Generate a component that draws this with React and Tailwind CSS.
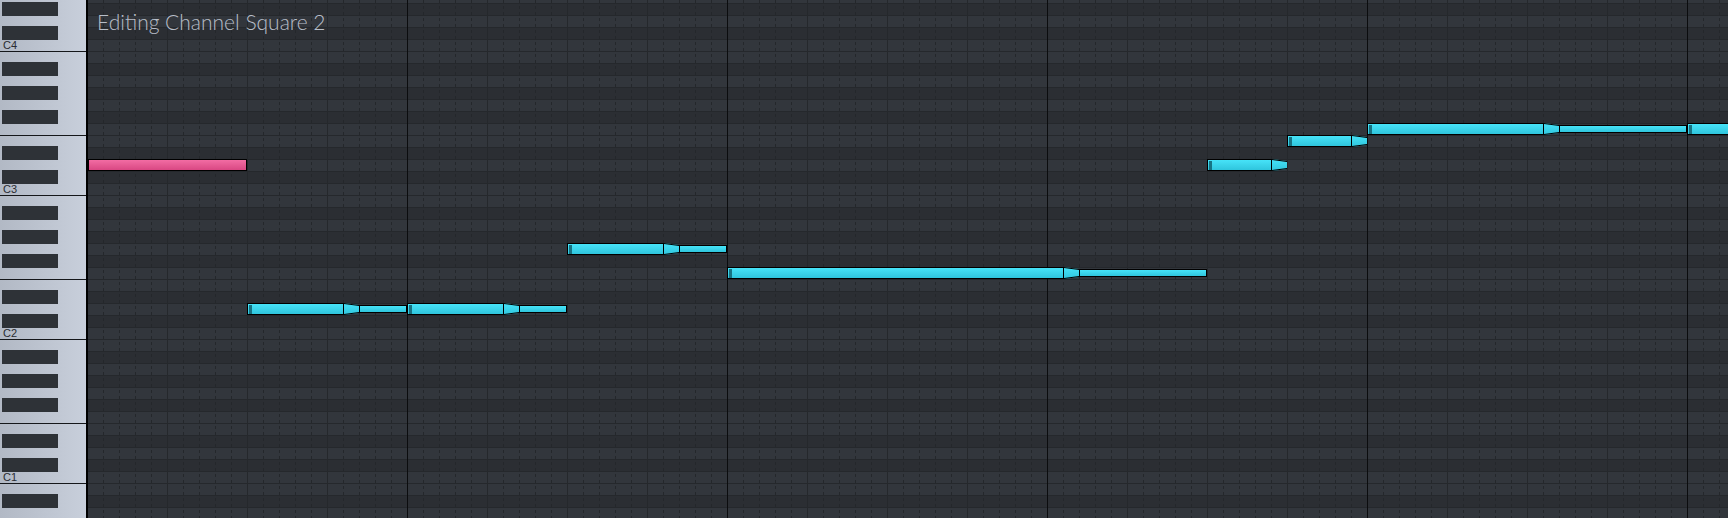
import React from "react";

const BLACK = new Set([1, 3, 6, 8, 10]);
const TOP_NOTE = 52; // E4
const BOTTOM_NOTE = 9; // A0
const GRID_X0 = 88;
const GRID_W = 1728 - GRID_X0;
const rowTop = (n) => -9 + (TOP_NOTE - n) * 12;

const ROWS = [];
for (let n = TOP_NOTE; n >= BOTTOM_NOTE; n--) ROWS.push(n);

const NOTES = [
  { s: 88, n: 38, e: 247, pink: true },
  { s: 247, n: 26, r: 343, e: 407 },
  { s: 407, n: 26, r: 503, e: 567 },
  { s: 567, n: 31, r: 663, e: 727 },
  { s: 727, n: 29, r: 1063, e: 1207 },
  { s: 1207, n: 38, r: 1271, e: 1287 },
  { s: 1287, n: 40, r: 1351, e: 1367 },
  { s: 1367, n: 41, r: 1543, e: 1687 },
  { s: 1687, n: 41, e: 1760 },
];

function KeyRow({ n }) {
  const s = n % 12;
  const isBlack = BLACK.has(s);
  const lineTop = s === 11 || s === 4;
  return (
    <div
      className={`h-[12px] shrink-0 flex items-end ${
        lineTop ? "border-t border-[#15171a]" : ""
      }`}
    >
      {isBlack ? (
        <div className="self-start ml-[2px] -mt-[1px] w-[56px] h-[14px] bg-[#2e3237]" />
      ) : null}
      {s === 0 ? (
        <span className="pl-[3px] text-[11px] leading-[11px] text-[#2a2d33] font-['Liberation_Sans',sans-serif]">
          C{Math.floor(n / 12)}
        </span>
      ) : null}
    </div>
  );
}

function GridRow({ n }) {
  const isBlack = BLACK.has(n % 12);
  return (
    <div
      className={`h-[12px] shrink-0 border-t border-[#25282c] ${
        isBlack ? "bg-[#2b2e33]" : "bg-[#32363c]"
      }`}
    />
  );
}

function GridLines() {
  const lines = [];
  for (let k = 1; 16 * k - 1 < GRID_W; k++) {
    const x = 16 * k - 1 + 0.5;
    if (k % 20 === 0)
      lines.push(<line key={k} x1={x} x2={x} y1={0} y2={518} stroke="#0b0c0e" />);
    else if (k % 5 === 0)
      lines.push(<line key={k} x1={x} x2={x} y1={0} y2={518} stroke="#25282c" />);
    else
      lines.push(
        <line key={k} x1={x} x2={x} y1={0} y2={518} stroke="#24272b" strokeDasharray="3 3" />
      );
  }
  return (
    <svg
      className="absolute left-0 top-0 pointer-events-none"
      width={GRID_W}
      height={518}
    >
      {lines}
    </svg>
  );
}

function Arrow() {
  return (
    <svg width="15" height="12" className="block shrink-0">
      <defs>
        <linearGradient id="cyArrow" x1="0" y1="0" x2="0" y2="1">
          <stop offset="0" stopColor="#46e3f8" />
          <stop offset="1" stopColor="#2fc5dd" />
        </linearGradient>
      </defs>
      <polygon points="0,0 15,2 15,10 0,12" fill="url(#cyArrow)" />
      <line x1="0" y1="0.5" x2="15" y2="2.5" stroke="#000" />
      <line x1="0" y1="11.5" x2="15" y2="9.5" stroke="#000" />
    </svg>
  );
}

function Note({ s, n, r, e, pink }) {
  const left = s - GRID_X0;
  const top = rowTop(n);
  const thickW = r != null ? r + 1 - s : e - s;
  const tailW = r != null ? e - (r + 16) : 0;
  return (
    <div className="absolute flex items-center h-[12px]" style={{ left, top }}>
      <div
        className={`h-[12px] shrink-0 border border-black ${
          pink
            ? "bg-linear-to-b from-[#f26ca3] to-[#d94783]"
            : "bg-linear-to-b from-[#46e3f8] to-[#2fc5dd]"
        }`}
        style={{ width: thickW }}
      >
        {!pink ? <div className="ml-[1px] mt-[1px] w-[3px] h-[9px] bg-[#177383]" /> : null}
      </div>
      {r != null ? <Arrow /> : null}
      {tailW > 0 ? (
        <div
          className="h-[8px] shrink-0 border border-black bg-linear-to-b from-[#46e3f8] to-[#2fc5dd]"
          style={{ width: tailW }}
        />
      ) : null}
    </div>
  );
}

export default function App() {
  return (
    <div className="w-[1728px] h-[518px] flex overflow-hidden bg-[#2f3338]">
      <div className="w-[86px] h-full shrink-0 overflow-hidden bg-linear-to-r from-[#b2b9c5] to-[#c8cfdb]">
        <div className="flex flex-col -mt-[9px]">
          {ROWS.map((n) => (
            <KeyRow key={n} n={n} />
          ))}
        </div>
      </div>
      <div className="w-[2px] h-full shrink-0 bg-black" />
      <div className="relative flex-1 h-full overflow-hidden">
        <div className="flex flex-col -mt-[9px]">
          {ROWS.map((n) => (
            <GridRow key={n} n={n} />
          ))}
        </div>
        <GridLines />
        {NOTES.map((nt, i) => (
          <Note key={i} {...nt} />
        ))}
        <div className="absolute left-[9px] top-[11px] text-[21px] leading-[21px] font-light text-[#b8bec8] font-['Lato',sans-serif] whitespace-nowrap">
          Editing Channel Square 2
        </div>
      </div>
    </div>
  );
}
